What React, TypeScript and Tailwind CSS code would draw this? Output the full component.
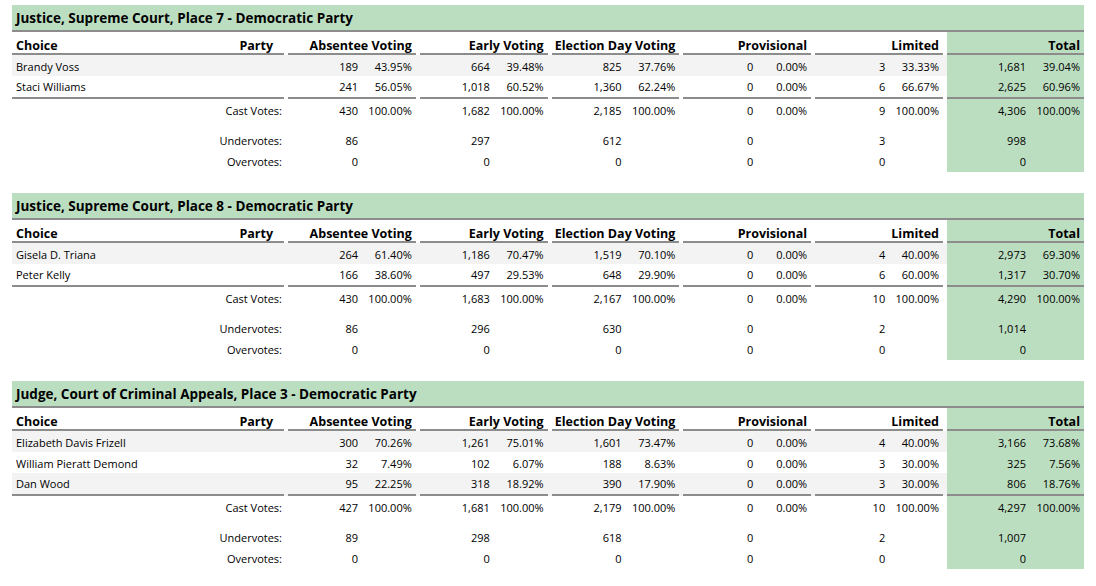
const font = { fontFamily: '"Open Sans", "Liberation Sans", sans-serif' };

type Cell = [string, string];

type Race = {
  title: string;
  rows: { name: string; cells: Cell[] }[];
  cast: Cell[];
  under: string[];
  over: string[];
};

const races: Race[] = [
  {
    title: "Justice, Supreme Court, Place 7 - Democratic Party",
    rows: [
      {
        name: "Brandy Voss",
        cells: [["189", "43.95%"], ["664", "39.48%"], ["825", "37.76%"], ["0", "0.00%"], ["3", "33.33%"], ["1,681", "39.04%"]],
      },
      {
        name: "Staci Williams",
        cells: [["241", "56.05%"], ["1,018", "60.52%"], ["1,360", "62.24%"], ["0", "0.00%"], ["6", "66.67%"], ["2,625", "60.96%"]],
      },
    ],
    cast: [["430", "100.00%"], ["1,682", "100.00%"], ["2,185", "100.00%"], ["0", "0.00%"], ["9", "100.00%"], ["4,306", "100.00%"]],
    under: ["86", "297", "612", "0", "3", "998"],
    over: ["0", "0", "0", "0", "0", "0"],
  },
  {
    title: "Justice, Supreme Court, Place 8 - Democratic Party",
    rows: [
      {
        name: "Gisela D. Triana",
        cells: [["264", "61.40%"], ["1,186", "70.47%"], ["1,519", "70.10%"], ["0", "0.00%"], ["4", "40.00%"], ["2,973", "69.30%"]],
      },
      {
        name: "Peter Kelly",
        cells: [["166", "38.60%"], ["497", "29.53%"], ["648", "29.90%"], ["0", "0.00%"], ["6", "60.00%"], ["1,317", "30.70%"]],
      },
    ],
    cast: [["430", "100.00%"], ["1,683", "100.00%"], ["2,167", "100.00%"], ["0", "0.00%"], ["10", "100.00%"], ["4,290", "100.00%"]],
    under: ["86", "296", "630", "0", "2", "1,014"],
    over: ["0", "0", "0", "0", "0", "0"],
  },
  {
    title: "Judge, Court of Criminal Appeals, Place 3 - Democratic Party",
    rows: [
      {
        name: "Elizabeth Davis Frizell",
        cells: [["300", "70.26%"], ["1,261", "75.01%"], ["1,601", "73.47%"], ["0", "0.00%"], ["4", "40.00%"], ["3,166", "73.68%"]],
      },
      {
        name: "William Pieratt Demond",
        cells: [["32", "7.49%"], ["102", "6.07%"], ["188", "8.63%"], ["0", "0.00%"], ["3", "30.00%"], ["325", "7.56%"]],
      },
      {
        name: "Dan Wood",
        cells: [["95", "22.25%"], ["318", "18.92%"], ["390", "17.90%"], ["0", "0.00%"], ["3", "30.00%"], ["806", "18.76%"]],
      },
    ],
    cast: [["427", "100.00%"], ["1,681", "100.00%"], ["2,179", "100.00%"], ["0", "0.00%"], ["10", "100.00%"], ["4,297", "100.00%"]],
    under: ["89", "298", "618", "0", "2", "1,007"],
    over: ["0", "0", "0", "0", "0", "0"],
  },
];

const headers = ["Absentee Voting", "Early Voting", "Election Day Voting", "Provisional", "Limited"];

const grid = "grid grid-cols-[272px_repeat(5,127.8px)_137px] gap-x-[4px]";
const line = "border-b-2 border-[#8c8c8c]";
const green = "bg-[#bcdec0]";

function VoteCell({ cell, total, ruled, pad }: { cell: Cell; total?: boolean; ruled?: boolean; pad: string }) {
  return (
    <div className={`flex items-center ${pad} ${total ? green : ""} ${ruled ? line : ""}`}>
      <span className={`${total ? "w-[79px]" : "w-[70px]"} text-right`}>{cell[0]}</span>
      <span className="flex-1 text-right pr-[4px]">{cell[1]}</span>
    </div>
  );
}

function CountRow({ label, values }: { label: string; values: string[] }) {
  return (
    <div className={`${grid} h-[21px]`}>
      <div className="flex items-center justify-end pt-[2px] pr-[2px]">{label}</div>
      {values.map((v, i) => (
        <div key={i} className={`flex items-center pt-[2px] ${i === 5 ? green : ""}`}>
          <span className={`${i === 5 ? "w-[79px]" : "w-[70px]"} text-right`}>{v}</span>
        </div>
      ))}
    </div>
  );
}

function RaceTable({ race }: { race: Race }) {
  return (
    <div className="flex flex-col">
      <div className={`h-[27px] ${green} border-b-2 border-[#8c8c8c] flex items-center pt-[2px] pl-[4px] text-[13.5px] font-bold`}>
        {race.title}
      </div>

      <div className={`${grid} h-[23px] text-[12.5px] font-bold leading-[14px]`}>
        <div className={`${line} flex items-end justify-between pl-[4px] pr-[11px]`}>
          <span>Choice</span>
          <span>Party</span>
        </div>
        {headers.map((h) => (
          <div key={h} className={`${line} flex items-end justify-end pr-[4px]`}>
            {h}
          </div>
        ))}
        <div className={`${line} ${green} flex items-end justify-end pr-[4px]`}>Total</div>
      </div>

      {race.rows.map((r, idx) => {
        const last = idx === race.rows.length - 1;
        return (
          <div key={r.name} className={`${grid} ${last ? "h-[23px]" : "h-[21px]"} ${idx % 2 === 0 ? "bg-[#f3f3f3]" : ""}`}>
            <div className={`flex items-center pl-[4px] ${last ? `${line} pt-[1px]` : "pt-[3px]"}`}>{r.name}</div>
            {r.cells.map((c, i) => (
              <VoteCell key={i} cell={c} total={i === 5} ruled={last} pad={last ? "pt-[1px]" : "pt-[3px]"} />
            ))}
          </div>
        );
      })}

      <div className={`${grid} h-[22px]`}>
        <div className="flex items-center justify-end pt-[2px] pr-[2px]">Cast Votes:</div>
        {race.cast.map((c, i) => (
          <VoteCell key={i} cell={c} total={i === 5} pad="pt-[2px]" />
        ))}
      </div>

      <div className={`${grid} h-[9px]`}>
        <div className={`col-start-7 ${green}`} />
      </div>

      <CountRow label="Undervotes:" values={race.under} />
      <CountRow label="Overvotes:" values={race.over} />
    </div>
  );
}

export default function App() {
  return (
    <div className="w-[1096px] h-[586px] bg-white text-black text-[11px] overflow-hidden" style={font}>
      <div className="pt-[5px] pl-[12px] w-[1084px] flex flex-col gap-[21px]">
        {races.map((r) => (
          <RaceTable key={r.title} race={r} />
        ))}
      </div>
    </div>
  );
}
